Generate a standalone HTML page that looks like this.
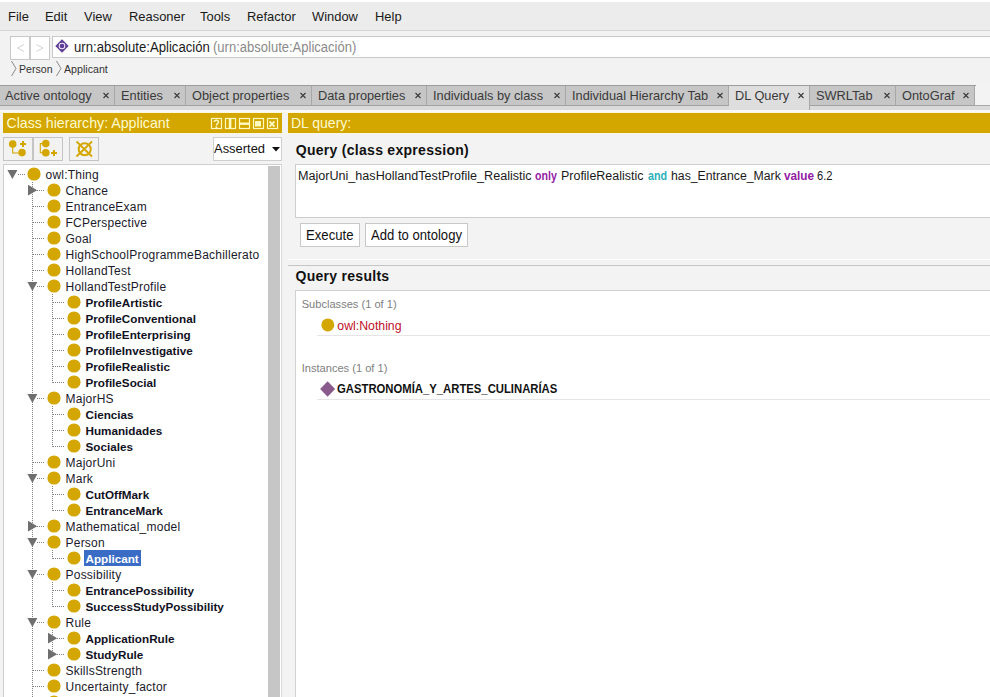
<!DOCTYPE html>
<html><head><meta charset="utf-8">
<style>
*{box-sizing:border-box;margin:0;padding:0}
html,body{width:990px;height:697px;overflow:hidden}
body{position:relative;background:#f3f3f3;font-family:"Liberation Sans",sans-serif;color:#111}
.ab{position:absolute}
.t{position:absolute;white-space:nowrap;line-height:1}
.menu{font-size:13.6px;color:#1a1a1a;transform-origin:0 0;transform:scaleX(0.95)}
.tab{position:absolute;top:86px;height:20px;background:#c5c5c5;border-right:1px solid #a8a8a8;border-bottom:1px solid #a0a0a0}
.tab span{position:absolute;white-space:nowrap;font-size:13.6px;line-height:1;top:2.5px;color:#3a3a3a;transform-origin:0 0;transform:scaleX(0.94)}
.tab i{position:absolute;font-style:normal;font-size:10px;font-weight:bold;top:5px;color:#333;line-height:1}
.tree{font-size:12px;letter-spacing:0.23px;color:#1a1a2a}
.treeb{font-size:11.7px;font-weight:bold;color:#111122}
</style></head><body>

<div class="ab" style="left:0;top:0;width:990px;height:31px;background:#ececec;border-bottom:1px solid #d6d6d6"></div>
<div class="ab" style="left:0;top:0;width:990px;height:2px;background:#fefefe"></div>
<div class="t menu" style="left:8.3px;top:9.5px">File</div>
<div class="t menu" style="left:44.7px;top:9.5px">Edit</div>
<div class="t menu" style="left:84.1px;top:9.5px">View</div>
<div class="t menu" style="left:129.2px;top:9.5px">Reasoner</div>
<div class="t menu" style="left:200px;top:9.5px">Tools</div>
<div class="t menu" style="left:247.2px;top:9.5px">Refactor</div>
<div class="t menu" style="left:311.8px;top:9.5px">Window</div>
<div class="t menu" style="left:374.8px;top:9.5px">Help</div>
<div class="ab" style="left:0;top:31px;width:990px;height:54px;background:#f2f2f2"></div>
<div class="ab" style="left:10px;top:36px;width:20px;height:24px;background:#fff;border:1px solid #c9c9c9"></div>
<div class="ab" style="left:30px;top:36px;width:20px;height:24px;background:#fff;border:1px solid #c9c9c9"></div>
<svg class="ab" style="left:0;top:0" width="60" height="60"><polyline points="24,44.5 17.5,48 24,51.5" fill="none" stroke="#d2d2d2" stroke-width="1"/><polyline points="36.5,44.5 43,48 36.5,51.5" fill="none" stroke="#d2d2d2" stroke-width="1"/></svg>
<div class="ab" style="left:52px;top:36px;width:950px;height:22px;background:#fff;border:1px solid #c9c9c9"></div>
<svg class="ab" style="left:54px;top:38px" width="17" height="17"><polygon points="8,1.3 14.7,8 8,14.7 1.3,8" fill="#5e3e94"/><circle cx="8" cy="8" r="3.3" fill="#f2eaff"/><circle cx="8" cy="8" r="2.3" fill="#5e3e94"/></svg>
<div class="t" style="left:74px;top:39.5px;font-size:14px;color:#1a1a1a;transform-origin:0 0;transform:scaleX(0.938)">urn:absolute:Aplicación</div>
<div class="t" style="left:213px;top:39.5px;font-size:14px;color:#8a8a8a;transform-origin:0 0;transform:scaleX(0.93)">(urn:absolute:Aplicación)</div>
<svg class="ab" style="left:0;top:58px" width="80" height="22"><polyline points="11.5,3 16,10.5 11.5,18" fill="none" stroke="#8a8a8a" stroke-width="1"/><polyline points="56.5,3 61,10.5 56.5,18" fill="none" stroke="#8a8a8a" stroke-width="1"/></svg>
<div class="t" style="left:18.5px;top:63.2px;font-size:11.7px;color:#333;transform-origin:0 0;transform:scaleX(0.905)">Person</div>
<div class="t" style="left:64.2px;top:63.2px;font-size:11.7px;color:#333;transform-origin:0 0;transform:scaleX(0.91)">Applicant</div>
<div class="ab" style="left:0;top:85px;width:976px;height:1px;background:#9c9c9c"></div>
<div class="ab" style="left:0;top:106px;width:990px;height:4px;background:#dadada"></div>
<div class="ab" style="left:0;top:110px;width:990px;height:2px;background:#f8f8f8"></div>
<div class="ab" style="left:0;top:86px;width:1px;height:20px;background:#a8a8a8"></div>
<div class="ab" style="left:975px;top:105px;width:15px;height:1px;background:#a8a8a8"></div>
<div class="tab" style="left:0px;width:115px;height:20px;background:#c6c6c6;border-bottom:1px solid #a0a0a0"><span style="left:5px">Active ontology</span></div>
<svg class="ab" style="left:101.5px;top:91px" width="8" height="9"><path d="M1.5,2 L6.5,7 M6.5,2 L1.5,7" stroke="#3a3a3a" stroke-width="1.1"/></svg>
<div class="tab" style="left:115px;width:71px;height:20px;background:#c6c6c6;border-bottom:1px solid #a0a0a0"><span style="left:5.5px">Entities</span></div>
<svg class="ab" style="left:172.5px;top:91px" width="8" height="9"><path d="M1.5,2 L6.5,7 M6.5,2 L1.5,7" stroke="#3a3a3a" stroke-width="1.1"/></svg>
<div class="tab" style="left:186px;width:126px;height:20px;background:#c6c6c6;border-bottom:1px solid #a0a0a0"><span style="left:5.5px">Object properties</span></div>
<svg class="ab" style="left:298.5px;top:91px" width="8" height="9"><path d="M1.5,2 L6.5,7 M6.5,2 L1.5,7" stroke="#3a3a3a" stroke-width="1.1"/></svg>
<div class="tab" style="left:312px;width:115px;height:20px;background:#c6c6c6;border-bottom:1px solid #a0a0a0"><span style="left:5.5px">Data properties</span></div>
<svg class="ab" style="left:413.5px;top:91px" width="8" height="9"><path d="M1.5,2 L6.5,7 M6.5,2 L1.5,7" stroke="#3a3a3a" stroke-width="1.1"/></svg>
<div class="tab" style="left:427px;width:139px;height:20px;background:#c6c6c6;border-bottom:1px solid #a0a0a0"><span style="left:5.5px">Individuals by class</span></div>
<svg class="ab" style="left:552.5px;top:91px" width="8" height="9"><path d="M1.5,2 L6.5,7 M6.5,2 L1.5,7" stroke="#3a3a3a" stroke-width="1.1"/></svg>
<div class="tab" style="left:566px;width:163px;height:20px;background:#c6c6c6;border-bottom:1px solid #a0a0a0"><span style="left:5.5px">Individual Hierarchy Tab</span></div>
<svg class="ab" style="left:715.5px;top:91px" width="8" height="9"><path d="M1.5,2 L6.5,7 M6.5,2 L1.5,7" stroke="#3a3a3a" stroke-width="1.1"/></svg>
<div class="tab" style="left:729px;width:81px;height:24px;background:#dedede;border-bottom:none"><span style="left:5.5px">DL Query</span></div>
<svg class="ab" style="left:796.5px;top:91px" width="8" height="9"><path d="M1.5,2 L6.5,7 M6.5,2 L1.5,7" stroke="#3a3a3a" stroke-width="1.1"/></svg>
<div class="tab" style="left:810px;width:86px;height:20px;background:#c6c6c6;border-bottom:1px solid #a0a0a0"><span style="left:5.5px">SWRLTab</span></div>
<svg class="ab" style="left:882.5px;top:91px" width="8" height="9"><path d="M1.5,2 L6.5,7 M6.5,2 L1.5,7" stroke="#3a3a3a" stroke-width="1.1"/></svg>
<div class="tab" style="left:896px;width:79px;height:20px;background:#c6c6c6;border-bottom:1px solid #a0a0a0"><span style="left:5.5px">OntoGraf</span></div>
<svg class="ab" style="left:961.5px;top:91px" width="8" height="9"><path d="M1.5,2 L6.5,7 M6.5,2 L1.5,7" stroke="#3a3a3a" stroke-width="1.1"/></svg>
<div class="ab" style="left:0;top:112px;width:990px;height:1px;background:#fbf8dc"></div>
<div class="ab" style="left:0;top:133px;width:990px;height:1px;background:#f9f7e4"></div>
<div class="ab" style="left:3px;top:113px;width:279px;height:20px;background:#d4a600"></div>
<div class="t" style="left:6.4px;top:116px;font-size:14.2px;color:#fffbd0">Class hierarchy: Applicant</div>
<svg class="ab" style="left:205px;top:113px" width="80" height="20"><rect x="6.5" y="5.5" width="10" height="10" fill="none" stroke="#fffbc0" stroke-width="1.2"/><rect x="20.5" y="5.5" width="10" height="10" fill="none" stroke="#fffbc0" stroke-width="1.2"/><rect x="34.5" y="5.5" width="10" height="10" fill="none" stroke="#fffbc0" stroke-width="1.2"/><rect x="48.5" y="5.5" width="10" height="10" fill="none" stroke="#fffbc0" stroke-width="1.2"/><rect x="62.5" y="5.5" width="10" height="10" fill="none" stroke="#fffbc0" stroke-width="1.2"/><path d="M9.3,9 C9.3,6.6 13.5,6.6 13.5,9 C13.5,10.6 11.4,10.6 11.4,12.4" fill="none" stroke="#fffbc0" stroke-width="1.5"/><rect x="10.6" y="13.3" width="1.7" height="1.7" fill="#fffbc0"/><rect x="23.8" y="6" width="2.6" height="9" fill="#fffbc0"/><rect x="34" y="9.5" width="10" height="2.4" fill="#fffbc0"/><rect x="50" y="8" width="6" height="5.5" fill="#fffbc0"/><path d="M64.5,8.5 L69.5,13.5 M69.5,8.5 L64.5,13.5" stroke="#fffbc0" stroke-width="1.8"/></svg>
<div class="ab" style="left:3px;top:137px;width:30px;height:24px;border:1px solid #c4c4c4;background:#f2f2f2"></div>
<div class="ab" style="left:33px;top:137px;width:30px;height:24px;border:1px solid #c4c4c4;background:#f2f2f2"></div>
<div class="ab" style="left:69px;top:137px;width:30px;height:24px;border:1px solid #c4c4c4;background:#f2f2f2"></div>
<svg class="ab" style="left:0;top:133px" width="110" height="32">
<path d="M12.7,11 V20 H18" fill="none" stroke="#d4a600" stroke-width="1.1"/>
<circle cx="12.7" cy="11" r="3.8" fill="#d4a600"/><circle cx="22" cy="19.6" r="3.8" fill="#d4a600"/>
<path d="M20,11 H26 M23,8 V14" stroke="#d4a600" stroke-width="2"/>
<path d="M45.8,10.6 H40.3 V19.8 H45" fill="none" stroke="#d4a600" stroke-width="1.1"/>
<circle cx="45.8" cy="10.6" r="3.8" fill="#d4a600"/><circle cx="45.8" cy="19.8" r="3.8" fill="#d4a600"/>
<path d="M51,20 H57 M54,17 V23" stroke="#d4a600" stroke-width="2"/>
<circle cx="84.7" cy="16.2" r="6" fill="none" stroke="#d4a600" stroke-width="2"/>
<path d="M76.5,8.5 L92,23.5 M92,8.5 L76.5,23.5" stroke="#d4a600" stroke-width="1.8"/>
</svg>
<div class="ab" style="left:213px;top:137px;width:69px;height:24px;background:#fff;border:1px solid #cfcfcf"></div>
<div class="t" style="left:214.4px;top:142px;font-size:13.7px;color:#111;transform-origin:0 0;transform:scaleX(0.945)">Asserted</div>
<svg class="ab" style="left:271px;top:146px" width="12" height="8"><polygon points="1,1 9,1 5,5.5" fill="#111"/></svg>
<div class="ab" style="left:3px;top:164px;width:279px;height:540px;background:#fff;border:1px solid #cfcfcf;border-right-color:#dadada"></div>
<div class="ab" style="left:268px;top:166px;width:12px;height:540px;background:#c6c6c6"></div>
<svg class="ab" style="left:0;top:0" width="290" height="697" shape-rendering="crispEdges"><line x1="18" y1="174.5" x2="26" y2="174.5" stroke="#808080" stroke-width="1" stroke-dasharray="1 1"/><line x1="32.5" y1="182" x2="32.5" y2="700" stroke="#808080" stroke-width="1" stroke-dasharray="1 1"/><line x1="37" y1="190.5" x2="44" y2="190.5" stroke="#808080" stroke-width="1" stroke-dasharray="1 1"/><line x1="33" y1="206.5" x2="44" y2="206.5" stroke="#808080" stroke-width="1" stroke-dasharray="1 1"/><line x1="33" y1="222.5" x2="44" y2="222.5" stroke="#808080" stroke-width="1" stroke-dasharray="1 1"/><line x1="33" y1="238.5" x2="44" y2="238.5" stroke="#808080" stroke-width="1" stroke-dasharray="1 1"/><line x1="33" y1="254.5" x2="44" y2="254.5" stroke="#808080" stroke-width="1" stroke-dasharray="1 1"/><line x1="33" y1="270.5" x2="44" y2="270.5" stroke="#808080" stroke-width="1" stroke-dasharray="1 1"/><line x1="37" y1="286.5" x2="44" y2="286.5" stroke="#808080" stroke-width="1" stroke-dasharray="1 1"/><line x1="52.5" y1="294" x2="52.5" y2="383" stroke="#808080" stroke-width="1" stroke-dasharray="1 1"/><line x1="53" y1="302.5" x2="64" y2="302.5" stroke="#808080" stroke-width="1" stroke-dasharray="1 1"/><line x1="53" y1="318.5" x2="64" y2="318.5" stroke="#808080" stroke-width="1" stroke-dasharray="1 1"/><line x1="53" y1="334.5" x2="64" y2="334.5" stroke="#808080" stroke-width="1" stroke-dasharray="1 1"/><line x1="53" y1="350.5" x2="64" y2="350.5" stroke="#808080" stroke-width="1" stroke-dasharray="1 1"/><line x1="53" y1="366.5" x2="64" y2="366.5" stroke="#808080" stroke-width="1" stroke-dasharray="1 1"/><line x1="53" y1="382.5" x2="64" y2="382.5" stroke="#808080" stroke-width="1" stroke-dasharray="1 1"/><line x1="37" y1="398.5" x2="44" y2="398.5" stroke="#808080" stroke-width="1" stroke-dasharray="1 1"/><line x1="52.5" y1="406" x2="52.5" y2="447" stroke="#808080" stroke-width="1" stroke-dasharray="1 1"/><line x1="53" y1="414.5" x2="64" y2="414.5" stroke="#808080" stroke-width="1" stroke-dasharray="1 1"/><line x1="53" y1="430.5" x2="64" y2="430.5" stroke="#808080" stroke-width="1" stroke-dasharray="1 1"/><line x1="53" y1="446.5" x2="64" y2="446.5" stroke="#808080" stroke-width="1" stroke-dasharray="1 1"/><line x1="33" y1="462.5" x2="44" y2="462.5" stroke="#808080" stroke-width="1" stroke-dasharray="1 1"/><line x1="37" y1="478.5" x2="44" y2="478.5" stroke="#808080" stroke-width="1" stroke-dasharray="1 1"/><line x1="52.5" y1="486" x2="52.5" y2="511" stroke="#808080" stroke-width="1" stroke-dasharray="1 1"/><line x1="53" y1="494.5" x2="64" y2="494.5" stroke="#808080" stroke-width="1" stroke-dasharray="1 1"/><line x1="53" y1="510.5" x2="64" y2="510.5" stroke="#808080" stroke-width="1" stroke-dasharray="1 1"/><line x1="37" y1="526.5" x2="44" y2="526.5" stroke="#808080" stroke-width="1" stroke-dasharray="1 1"/><line x1="37" y1="542.5" x2="44" y2="542.5" stroke="#808080" stroke-width="1" stroke-dasharray="1 1"/><line x1="52.5" y1="550" x2="52.5" y2="559" stroke="#808080" stroke-width="1" stroke-dasharray="1 1"/><line x1="53" y1="558.5" x2="64" y2="558.5" stroke="#808080" stroke-width="1" stroke-dasharray="1 1"/><line x1="37" y1="574.5" x2="44" y2="574.5" stroke="#808080" stroke-width="1" stroke-dasharray="1 1"/><line x1="52.5" y1="582" x2="52.5" y2="607" stroke="#808080" stroke-width="1" stroke-dasharray="1 1"/><line x1="53" y1="590.5" x2="64" y2="590.5" stroke="#808080" stroke-width="1" stroke-dasharray="1 1"/><line x1="53" y1="606.5" x2="64" y2="606.5" stroke="#808080" stroke-width="1" stroke-dasharray="1 1"/><line x1="37" y1="622.5" x2="44" y2="622.5" stroke="#808080" stroke-width="1" stroke-dasharray="1 1"/><line x1="52.5" y1="630" x2="52.5" y2="655" stroke="#808080" stroke-width="1" stroke-dasharray="1 1"/><line x1="57" y1="638.5" x2="64" y2="638.5" stroke="#808080" stroke-width="1" stroke-dasharray="1 1"/><line x1="57" y1="654.5" x2="64" y2="654.5" stroke="#808080" stroke-width="1" stroke-dasharray="1 1"/><line x1="33" y1="670.5" x2="44" y2="670.5" stroke="#808080" stroke-width="1" stroke-dasharray="1 1"/><line x1="33" y1="686.5" x2="44" y2="686.5" stroke="#808080" stroke-width="1" stroke-dasharray="1 1"/><line x1="33" y1="702.5" x2="44" y2="702.5" stroke="#808080" stroke-width="1" stroke-dasharray="1 1"/></svg>
<svg class="ab" style="left:0;top:0" width="290" height="697"><circle cx="34" cy="174" r="6.6" fill="#d4a600"/><polygon points="7.4,170 17.4,170 12.4,179" fill="#6f6f6f"/><circle cx="54" cy="190" r="6.6" fill="#d4a600"/><polygon points="28.0,184.8 37.199999999999996,190.2 28.0,195.6" fill="#6f6f6f"/><circle cx="54" cy="206" r="6.6" fill="#d4a600"/><circle cx="54" cy="222" r="6.6" fill="#d4a600"/><circle cx="54" cy="238" r="6.6" fill="#d4a600"/><circle cx="54" cy="254" r="6.6" fill="#d4a600"/><circle cx="54" cy="270" r="6.6" fill="#d4a600"/><circle cx="54" cy="286" r="6.6" fill="#d4a600"/><polygon points="27.4,282 37.4,282 32.4,291" fill="#6f6f6f"/><circle cx="74" cy="302" r="6.6" fill="#d4a600"/><circle cx="74" cy="318" r="6.6" fill="#d4a600"/><circle cx="74" cy="334" r="6.6" fill="#d4a600"/><circle cx="74" cy="350" r="6.6" fill="#d4a600"/><circle cx="74" cy="366" r="6.6" fill="#d4a600"/><circle cx="74" cy="382" r="6.6" fill="#d4a600"/><circle cx="54" cy="398" r="6.6" fill="#d4a600"/><polygon points="27.4,394 37.4,394 32.4,403" fill="#6f6f6f"/><circle cx="74" cy="414" r="6.6" fill="#d4a600"/><circle cx="74" cy="430" r="6.6" fill="#d4a600"/><circle cx="74" cy="446" r="6.6" fill="#d4a600"/><circle cx="54" cy="462" r="6.6" fill="#d4a600"/><circle cx="54" cy="478" r="6.6" fill="#d4a600"/><polygon points="27.4,474 37.4,474 32.4,483" fill="#6f6f6f"/><circle cx="74" cy="494" r="6.6" fill="#d4a600"/><circle cx="74" cy="510" r="6.6" fill="#d4a600"/><circle cx="54" cy="526" r="6.6" fill="#d4a600"/><polygon points="28.0,520.8 37.199999999999996,526.2 28.0,531.6" fill="#6f6f6f"/><circle cx="54" cy="542" r="6.6" fill="#d4a600"/><polygon points="27.4,538 37.4,538 32.4,547" fill="#6f6f6f"/><circle cx="74" cy="558" r="6.6" fill="#d4a600"/><circle cx="54" cy="574" r="6.6" fill="#d4a600"/><polygon points="27.4,570 37.4,570 32.4,579" fill="#6f6f6f"/><circle cx="74" cy="590" r="6.6" fill="#d4a600"/><circle cx="74" cy="606" r="6.6" fill="#d4a600"/><circle cx="54" cy="622" r="6.6" fill="#d4a600"/><polygon points="27.4,618 37.4,618 32.4,627" fill="#6f6f6f"/><circle cx="74" cy="638" r="6.6" fill="#d4a600"/><polygon points="48.0,632.8 57.199999999999996,638.2 48.0,643.6" fill="#6f6f6f"/><circle cx="74" cy="654" r="6.6" fill="#d4a600"/><polygon points="48.0,648.8 57.199999999999996,654.2 48.0,659.6" fill="#6f6f6f"/><circle cx="54" cy="670" r="6.6" fill="#d4a600"/><circle cx="54" cy="686" r="6.6" fill="#d4a600"/><circle cx="54" cy="702" r="6.6" fill="#d4a600"/></svg>
<div class="t tree" style="left:45.5px;top:169px">owl:Thing</div>
<div class="t tree" style="left:65.5px;top:185px">Chance</div>
<div class="t tree" style="left:65.5px;top:201px">EntranceExam</div>
<div class="t tree" style="left:65.5px;top:217px">FCPerspective</div>
<div class="t tree" style="left:65.5px;top:233px">Goal</div>
<div class="t tree" style="left:65.5px;top:249px">HighSchoolProgrammeBachillerato</div>
<div class="t tree" style="left:65.5px;top:265px">HollandTest</div>
<div class="t tree" style="left:65.5px;top:281px">HollandTestProfile</div>
<div class="t treeb" style="left:85.5px;top:297px">ProfileArtistic</div>
<div class="t treeb" style="left:85.5px;top:313px">ProfileConventional</div>
<div class="t treeb" style="left:85.5px;top:329px">ProfileEnterprising</div>
<div class="t treeb" style="left:85.5px;top:345px">ProfileInvestigative</div>
<div class="t treeb" style="left:85.5px;top:361px">ProfileRealistic</div>
<div class="t treeb" style="left:85.5px;top:377px">ProfileSocial</div>
<div class="t tree" style="left:65.5px;top:393px">MajorHS</div>
<div class="t treeb" style="left:85.5px;top:409px">Ciencias</div>
<div class="t treeb" style="left:85.5px;top:425px">Humanidades</div>
<div class="t treeb" style="left:85.5px;top:441px">Sociales</div>
<div class="t tree" style="left:65.5px;top:457px">MajorUni</div>
<div class="t tree" style="left:65.5px;top:473px">Mark</div>
<div class="t treeb" style="left:85.5px;top:489px">CutOffMark</div>
<div class="t treeb" style="left:85.5px;top:505px">EntranceMark</div>
<div class="t tree" style="left:65.5px;top:521px">Mathematical_model</div>
<div class="t tree" style="left:65.5px;top:537px">Person</div>
<div class="ab" style="left:84px;top:550px;width:57px;height:16px;background:#3a6cc6"></div>
<div class="t treeb" style="left:85.5px;top:553px;color:#fff">Applicant</div>
<div class="t tree" style="left:65.5px;top:569px">Possibility</div>
<div class="t treeb" style="left:85.5px;top:585px">EntrancePossibility</div>
<div class="t treeb" style="left:85.5px;top:601px">SuccessStudyPossibility</div>
<div class="t tree" style="left:65.5px;top:617px">Rule</div>
<div class="t treeb" style="left:85.5px;top:633px">ApplicationRule</div>
<div class="t treeb" style="left:85.5px;top:649px">StudyRule</div>
<div class="t tree" style="left:65.5px;top:665px">SkillsStrength</div>
<div class="t tree" style="left:65.5px;top:681px">Uncertainty_factor</div>
<div class="ab" style="left:288px;top:113px;width:702px;height:20px;background:#d4a600"></div>
<div class="t" style="left:291px;top:116px;font-size:14px;color:#fffbd0">DL query:</div>
<div class="t" style="left:295.8px;top:142.6px;font-size:14px;letter-spacing:0.28px;font-weight:bold;color:#111">Query (class expression)</div>
<div class="ab" style="left:295px;top:164px;width:700px;height:54px;background:#fff;border:1px solid #cdcdcd"></div>
<div class="t" style="left:298.4px;top:170.2px;font-size:12.0px;font-weight:normal;color:#1a1a1a;transform-origin:0 0;transform:scaleX(1.0487)">MajorUni_hasHollandTestProfile_Realistic</div>
<div class="t" style="left:535.4px;top:170.2px;font-size:12.0px;font-weight:bold;color:#9420a4;transform-origin:0 0;transform:scaleX(0.8838)">only</div>
<div class="t" style="left:561.4px;top:170.2px;font-size:12.0px;font-weight:normal;color:#1a1a1a;transform-origin:0 0;transform:scaleX(1.0383)">ProfileRealistic</div>
<div class="t" style="left:648.2px;top:170.2px;font-size:12.0px;font-weight:bold;color:#2ab0b8;transform-origin:0 0;transform:scaleX(0.8907)">and</div>
<div class="t" style="left:671.3px;top:170.2px;font-size:12.0px;font-weight:normal;color:#1a1a1a;transform-origin:0 0;transform:scaleX(1.0225)">has_Entrance_Mark</div>
<div class="t" style="left:784.1px;top:170.2px;font-size:12.0px;font-weight:bold;color:#9420a4;transform-origin:0 0;transform:scaleX(0.9810)">value</div>
<div class="t" style="left:817.2px;top:170.2px;font-size:12.0px;font-weight:normal;color:#1a1a1a;transform-origin:0 0;transform:scaleX(0.9293)">6.2</div>
<div class="ab" style="left:300px;top:223px;width:60px;height:24px;background:#fff;border:1px solid #c8c8c8"></div>
<div class="ab" style="left:365px;top:223px;width:103px;height:24px;background:#fff;border:1px solid #c8c8c8"></div>
<div class="t" style="left:306.2px;top:227.7px;font-size:14px;color:#111;transform-origin:0 0;transform:scaleX(0.939)">Execute</div>
<div class="t" style="left:370.9px;top:227.7px;font-size:14px;color:#111;transform-origin:0 0;transform:scaleX(0.935)">Add to ontology</div>
<div class="ab" style="left:288px;top:259px;width:702px;height:1px;background:#fff"></div>
<div class="ab" style="left:288px;top:265px;width:702px;height:1px;background:#c4c4c4"></div>
<div class="t" style="left:295.5px;top:269.2px;font-size:14px;letter-spacing:0.28px;font-weight:bold;color:#111">Query results</div>
<div class="ab" style="left:295px;top:290px;width:700px;height:420px;background:#fff;border:1px solid #d2d2d2"></div>
<div class="t" style="left:301.7px;top:299px;font-size:11.1px;color:#808080">Subclasses (1 of 1)</div>
<svg class="ab" style="left:315px;top:315px" width="30" height="30"><circle cx="12.8" cy="9.9" r="6.5" fill="#d4a600"/></svg>
<div class="t" style="left:337.3px;top:320px;font-size:12.3px;color:#c0102a">owl:Nothing</div>
<div class="ab" style="left:317px;top:335px;width:680px;height:1px;background:#e6e6e6"></div>
<div class="t" style="left:301.7px;top:363px;font-size:11.1px;color:#808080">Instances (1 of 1)</div>
<svg class="ab" style="left:315px;top:375px" width="30" height="30"><polygon points="12.6,6.2 20.1,14 12.6,21.7 5.1,14" fill="#8a5a8c"/></svg>
<div class="t" style="left:337.3px;top:383.5px;font-size:11.9px;font-weight:bold;color:#111;transform-origin:0 0;transform:scaleX(0.95)">GASTRONOMÍA_Y_ARTES_CULINARÍAS</div>
<div class="ab" style="left:317px;top:399px;width:680px;height:1px;background:#e6e6e6"></div>
</body></html>
